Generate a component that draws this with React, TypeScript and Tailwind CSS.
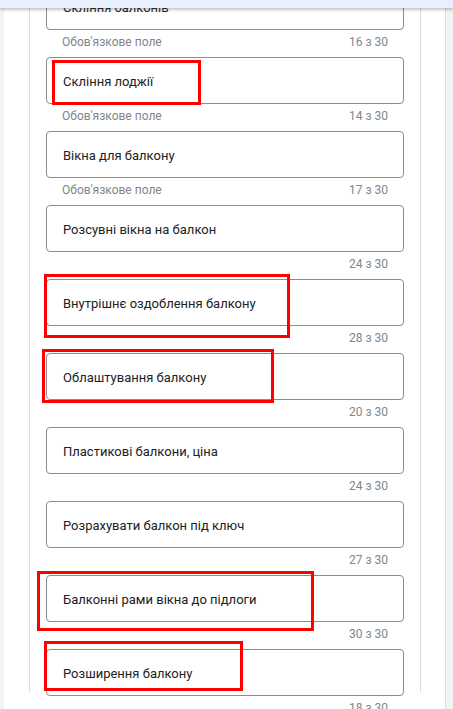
import React from "react";

const items: { label: string; required: boolean; count: number }[] = [
  { label: "Скління балконів", required: true, count: 16 },
  { label: "Скління лоджії", required: true, count: 14 },
  { label: "Вікна для балкону", required: true, count: 17 },
  { label: "Розсувні вікна на балкон", required: false, count: 24 },
  { label: "Внутрішнє оздоблення балкону", required: false, count: 28 },
  { label: "Облаштування балкону", required: false, count: 20 },
  { label: "Пластикові балкони, ціна", required: false, count: 24 },
  { label: "Розрахувати балкон під ключ", required: false, count: 27 },
  { label: "Балконні рами вікна до підлоги", required: false, count: 30 },
  { label: "Розширення балкону", required: false, count: 18 },
];

const marks = [
  "left-[52px] top-[60px] w-[149px] h-[45px]",
  "left-[44px] top-[274px] w-[246px] h-[64px]",
  "left-[42px] top-[349px] w-[232px] h-[54px]",
  "left-[37px] top-[571px] w-[277px] h-[60px]",
  "left-[44px] top-[641px] w-[199px] h-[50px]",
];

export default function App() {
  return (
    <div
      className="relative w-[453px] h-[709px] overflow-hidden bg-[#f1f3f4] flex"
      style={{ fontFamily: "Roboto, 'Liberation Sans', sans-serif" }}
    >
      <div className="w-[4px] shrink-0" />
      <div className="w-[442px] shrink-0 bg-white border-r border-[#dadce0] pl-[25px]">
        <div className="w-[392px] h-full border-x border-[#dadce0] bg-white">
          <div className="mt-[-17px] px-[16px] flex flex-col">
            {items.map((it, i) => (
              <div key={i} className="flex flex-col">
                <div className="h-[47px] border border-[#8a8d91] rounded-[4px] flex items-center pl-[16px] pt-[3px] text-[13px] text-[#202124]">
                  {it.label}
                </div>
                <div className="h-[27px] flex justify-between px-[16px] pt-[4px] text-[12px] leading-[16px] text-[#80868b]">
                  <span>{it.required ? "Обов'язкове поле" : ""}</span>
                  <span>{it.count} з 30</span>
                </div>
              </div>
            ))}
          </div>
        </div>
      </div>
      <div className="absolute left-0 top-0 w-full h-[8px] bg-[#e8f0fe] shadow-[0_2px_3px_rgba(60,64,67,0.3)]" />
      {marks.map((m, i) => (
        <div key={i} className={`absolute border-[3px] border-[#ff0000] ${m}`} />
      ))}
    </div>
  );
}
